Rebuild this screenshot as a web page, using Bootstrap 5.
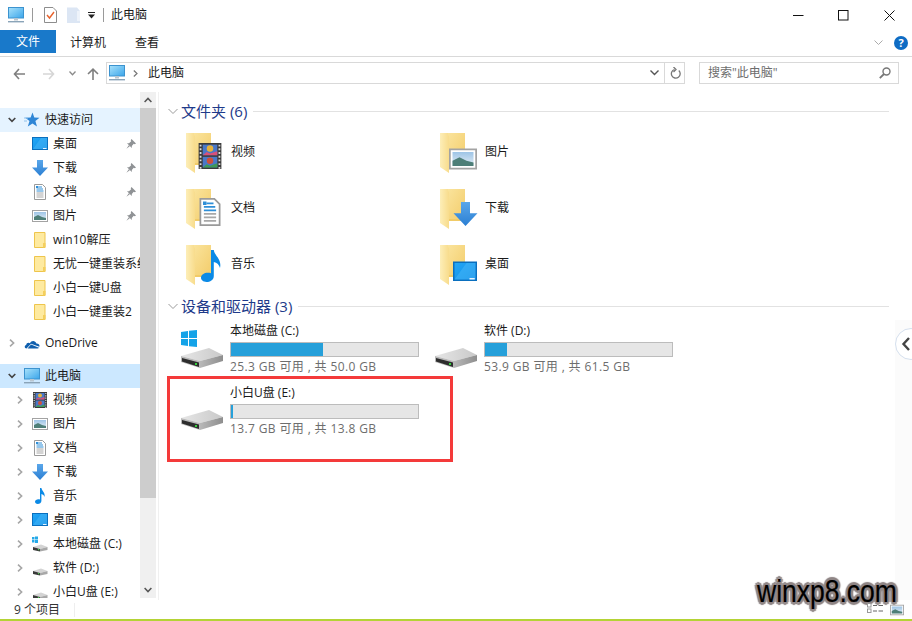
<!DOCTYPE html>
<html lang="zh-CN">
<head>
  <meta charset="utf-8">
  <meta name="viewport" content="width=device-width, initial-scale=1">
  <title>此电脑</title>
  <link href="https://cdn.jsdelivr.net/npm/bootstrap@5.3.3/dist/css/bootstrap.min.css" rel="stylesheet">
  <style>
    html, body { height: 100%; }
    body { font-family: "Open Sans", "Noto Sans CJK SC", sans-serif; font-size: 12px; line-height: 16px; color: #1a1a1a; background: #fff; overflow: hidden; position: relative; }
    svg { display: block; flex: none; }
    .title-row { height: 30px; }
    .qa-sep { width: 1px; height: 14px; background: #9a9a9a; }
    .tab-row { height: 27px; padding-bottom: 3px; border-bottom: 1px solid #d9d9d9; }
    .file-tab { width: 56px; height: 23px; background: #1979ca; color: #fff; }
    .addr-row { height: 35px; padding-top: 5px; }
    .addr-box { height: 22px; border: 1px solid #d9d9d9; }
    .main-area { height: 508px; }
    .side-pane { width: 140px; height: 506px; overflow: hidden; padding-top: 16px; white-space: nowrap; }
    .side-row { height: 24px; padding-left: 8px; }
    .side-row.lvl1 { padding-left: 16px; }
    .side-row .lbl { margin-left: 5px; }
    .tw { width: 8px; flex: none; }
    .side-icon { margin-left: 8px; }
    .row-quick { background: #e5f3ff; }
    .row-pc { background: #cce8ff; }
    .pin-icon { position: absolute; left: 126px; }
    .scroll-col { width: 16px; height: 506px; background: #f0f0f0; }
    .scroll-btn { height: 16px; }
    .scroll-thumb { height: 390px; background: #cdcdcd; }
    .pane-line { width: 1px; margin-left: 2px; height: 100%; background: #f0f0f0; }
    .content-pane { width: 730px; padding: 9px 0 0 9px; }
    .group-head { height: 20px; width: 721px; color: #1e3a8a; font-size: 15px; }
    .group-head .rule { height: 1px; background: #e2e2e2; margin-left: 6px; }
    .tile-grid { display: grid; grid-template-columns: 254px 254px; grid-auto-rows: 56px; margin: 3px 0 0 8px; }
    .folder-tile { padding-left: 10px; }
    .folder-tile svg { margin-top: 2px; }
    .folder-tile span { margin-left: 5px; }
    .drive-grid { display: grid; grid-template-columns: 254px 254px; grid-auto-rows: 62px; margin: 6px 0 0 8px; }
    .drive-tile { padding-left: 5px; }
    .drive-tile svg { margin-top: 8px; }
    .drive-info { margin-left: 7px; width: 189px; }
    .drive-name { height: 18px; line-height: 18px; }
    .drive-bar { height: 15px; margin-top: 2px; background: #e6e6e6; border: 1px solid #bcbcbc; }
    .drive-fill { height: 100%; background: #26a0da; }
    .drive-free { height: 17px; line-height: 17px; color: #6d6d6d; margin-top: 1px; white-space: nowrap; letter-spacing: .37px; }
    .status-row { height: 19px; padding-left: 14px; color: #333; }
    .status-sep { width: 1px; height: 14px; background: #eee; margin-left: 14px; }
    .green-line { height: 2px; background: #b4d335; }
    .red-box { position: absolute; left: 167px; top: 376px; width: 286px; height: 86px; border: 3px solid #f43a3a; }
    .right-strip { position: absolute; left: 895px; top: 320px; width: 17px; height: 280px; background: #fbfbfb; }
    .side-tab { position: absolute; left: 895px; top: 328px; width: 32px; height: 32px; border-radius: 50%; background: #fff; border: 1px solid #d5e0ee; }
    .side-tab svg { margin: 7px 0 0 5px; }
    .wm-text { position: absolute; left: 757px; top: 572px; font-family: "Liberation Sans", sans-serif; font-size: 31px; line-height: 40px; color: #000; white-space: nowrap; transform: scaleX(.855); transform-origin: left center; -webkit-text-stroke: .2px #000; text-shadow: 3px 0 1px #8f8585, -3px 0 1px #8f8585, 0 3px 1px #8f8585, 0 -3px 1px #8f8585, 2px 2px 1px #8f8585, -2px -2px 1px #8f8585, 2px -2px 1px #8f8585, -2px 2px 1px #8f8585; }
    .view-icons { position: absolute; left: 867px; top: 603px; }
  </style>
</head>
<body>

<!-- shared icons -->
<svg width="0" height="0" class="position-absolute">
  <defs>
    <linearGradient id="gScreen" x1="0" y1="0" x2="1" y2="1"><stop offset="0" stop-color="#a9e2fb"/><stop offset="1" stop-color="#3aa5ea"/></linearGradient>
    <linearGradient id="gBack" x1="0" y1="0" x2="1" y2="1"><stop offset="0" stop-color="#fae39b"/><stop offset="1" stop-color="#f3cd6c"/></linearGradient>
    <linearGradient id="gFlap" x1="0" y1="0" x2="1" y2="0"><stop offset="0" stop-color="#fdeeb8"/><stop offset="1" stop-color="#f8dc8c"/></linearGradient>
    <linearGradient id="gDesk" x1="0" y1="0" x2="1" y2="1"><stop offset="0" stop-color="#23a8f6"/><stop offset="1" stop-color="#0f8be6"/></linearGradient>
    <linearGradient id="gArrow" x1="0" y1="0" x2="0" y2="1"><stop offset="0" stop-color="#5aa7ea"/><stop offset="1" stop-color="#2b7fd3"/></linearGradient>
    <linearGradient id="gTop" x1="0" y1="0" x2="1" y2="0"><stop offset="0" stop-color="#e6e6e6"/><stop offset="1" stop-color="#c9c9c9"/></linearGradient>
    <linearGradient id="gSide" x1="0" y1="0" x2="1" y2="0"><stop offset="0" stop-color="#b8b8b8"/><stop offset="1" stop-color="#8e8e8e"/></linearGradient>
    <linearGradient id="gSky" x1="0" y1="0" x2="0" y2="1"><stop offset="0" stop-color="#9dc4e6"/><stop offset="1" stop-color="#e4eef5"/></linearGradient>

    <symbol id="i-pc" viewBox="0 0 16 16">
      <rect x="0.5" y="0.5" width="15" height="10.5" fill="url(#gScreen)" stroke="#3c93cf"/>
      <rect x="6" y="11" width="4" height="2.5" fill="#b9c6d0"/>
      <rect x="0" y="14" width="16" height="1.4" fill="#8aa4b8"/>
    </symbol>
    <symbol id="i-desk" viewBox="0 0 16 16">
      <rect x="0.5" y="1.5" width="15" height="12" fill="url(#gDesk)" stroke="#0a6fbe"/>
      <path d="M1 13 L9 2 H15 V13 Z" fill="#4fbcf8" opacity=".45"/>
      <rect x="11" y="12" width="3.5" height="1" fill="#e6f4ff"/>
    </symbol>
    <symbol id="i-down" viewBox="0 0 16 16">
      <path d="M5 0 H11 V7.5 H16 L8 16 L0 7.5 H5 Z" fill="url(#gArrow)"/>
    </symbol>
    <symbol id="i-doc" viewBox="0 0 16 16">
      <path d="M2.5 .5 H10.5 L13.5 3.5 V15.5 H2.5 Z" fill="#fff" stroke="#9a9a9a"/>
      <path d="M6 3 H10 M4.5 5 H11 M4.5 7 H11.5" stroke="#2f8fd8"/>
      <path d="M4.5 9 H11.5 M4.5 11 H11.5 M4.5 13 H11.5" stroke="#a8a8a8"/>
      <rect x="4" y="2" width="2" height="2" fill="#2f8fd8"/>
    </symbol>
    <symbol id="i-pic" viewBox="0 0 16 16">
      <rect x="0.5" y="2.5" width="15" height="11" fill="#fff" stroke="#a3a3a3"/>
      <rect x="2" y="4" width="12" height="8" fill="url(#gSky)"/>
      <path d="M2 9 L6 7 L10 9 L14 10 V12 H2 Z" fill="#4e7f78"/>
    </symbol>
    <symbol id="i-film" viewBox="0 0 16 16">
      <rect x="1" y="0" width="14" height="16" fill="#3a3a3a"/>
      <rect x="3.5" y="1" width="9" height="6.5" fill="#4a78c8"/>
      <rect x="3.5" y="8.5" width="9" height="6.5" fill="#4a78c8"/>
      <circle cx="8" cy="3.4" r="2" fill="#e8b23a"/>
      <path d="M3.5 7.5 L6 5.5 L8 6.5 L12.5 5 V7.5 Z" fill="#d8507a"/>
      <circle cx="8" cy="10.9" r="2" fill="#d0503a"/>
      <path d="M3.5 15 L6 13 L8 14 L12.5 12.5 V15 Z" fill="#3f9a56"/>
      <path d="M2.2 1 V16 M13.8 1 V16" stroke="#dcdcdc" stroke-width="1.1" stroke-dasharray="1.1 1.2"/>
    </symbol>
    <symbol id="i-note" viewBox="0 0 16 16">
      <path d="M8 0 H9.4 C9.8 3 13.5 4.5 12.5 9 C12.2 7.5 11 6.3 9.4 6 V13 C9.4 15 7.4 16 5.8 16 C4 16 3 15 3 13.8 C3 12 5.6 10.8 8 11.6 Z" fill="#0b8ae6"/>
    </symbol>
    <symbol id="i-small-folder" viewBox="0 0 16 16">
      <path d="M2.5 .5 H13 V15.5 H2.5 Z" fill="#feeaa0" stroke="#eec54c"/>
      <path d="M11 11 H13.5 V15.5 H11 Z" fill="#f4cf5d"/>
    </symbol>
    <symbol id="i-star" viewBox="0 0 16 16">
      <path d="M8.5 0.5 L10.3 5.5 L15.5 5.7 L11.4 9 L13 14.5 L8.5 11.4 L3.8 14.5 L5.5 9 L1.2 5.7 L6.6 5.5 Z" fill="#2f86d6"/>
      <path d="M0 6 H4 M0 9 H3" stroke="#8fc1ec"/>
    </symbol>
    <symbol id="i-cloud" viewBox="0 0 16 16">
      <path d="M2.5 13.5 C0.5 13.5 0 10.5 2.2 10 C2.3 7.8 4.8 7.2 6 8.3 C7.2 5.2 11.5 5.4 12.4 8.6 C14.8 8.6 16 10.4 15.4 11.8 L7 8.8 Z" fill="#0f5fae"/>
      <path d="M3.5 13.5 L7 9.5 L15 12.8 C14.8 13.3 14.2 13.5 13.6 13.5 Z" fill="#0f5fae"/>
    </symbol>
    <symbol id="i-pin" viewBox="0 0 10 10">
      <path d="M5.5 0 L10 4.5 L8.8 5.3 L7.7 4.8 L5.8 7 L5.8 9 L1 4.2 H3 L5.2 2.3 L4.7 1.2 Z M2.8 6.2 L3.8 7.2 L0.4 9.8 Z" fill="#8f9295"/>
    </symbol>
    <symbol id="i-hdd-small" viewBox="0 0 16 16">
      <path d="M1 11 L9 8.5 L15.5 11 L8 13 Z" fill="#d4d4d4"/>
      <path d="M1 11 L8 13 V15.5 L1 14 Z" fill="#3a3a3a"/>
      <path d="M8 13 L15.5 11 V14 L8 15.5 Z" fill="#a8a8a8"/>
      <rect x="6" y="13" width="1.2" height="1.2" fill="#46d34a"/>
    </symbol>
    <symbol id="i-hdd-win" viewBox="0 0 16 16">
      <use href="#i-hdd-small"/>
      <rect x="0" y="1" width="2.5" height="2.5" fill="#26a9e8"/><rect x="3" y="0.5" width="3" height="3" fill="#26a9e8"/>
      <rect x="0" y="4" width="2.5" height="2.5" fill="#26a9e8"/><rect x="3" y="4" width="3" height="3" fill="#26a9e8"/>
    </symbol>
    <symbol id="i-folder-big" viewBox="0 0 40 40">
      <rect x="8" y="0" width="17" height="30" fill="url(#gBack)"/>
      <path d="M0 0 H8 V2 L9 3 V40 L0 34 Z" fill="url(#gFlap)"/>
      <path d="M9 30 H25 V32 H9 Z" fill="#f1cb67"/>
    </symbol>
    <symbol id="i-drive" viewBox="0 0 42 44">
      <path d="M0 26 L28 18 L42 25 L19 31 Z" fill="url(#gTop)"/>
      <path d="M0 26 L19 31 V38 L0 32 Z" fill="#b9b9b9"/>
      <path d="M1 28 L18 32.5 V37 L1 31.5 Z" fill="#2d2d2d"/>
      <path d="M19 31 L42 25 V31 L19 38 Z" fill="url(#gSide)"/>
      <rect x="14" y="33" width="2" height="2" fill="#35d13c"/>
    </symbol>
    <symbol id="i-tw-open" viewBox="0 0 8 8"><path d="M.7 2 L4 5.4 L7.3 2" fill="none" stroke="#444" stroke-width="1.6"/></symbol>
    <symbol id="i-tw-closed" viewBox="0 0 8 8"><path d="M2 .7 L5.6 4 L2 7.3" fill="none" stroke="#a6a6a6" stroke-width="1.6"/></symbol>
    <symbol id="i-group" viewBox="0 0 10 10"><path d="M.5 3 L5 7.5 L9.5 3" fill="none" stroke="#9a9a9a"/></symbol>
  </defs>
</svg>

<!-- title bar -->
<div class="title-row d-flex align-items-center">
  <svg class="ms-2" width="16" height="16"><use href="#i-pc"/></svg>
  <div class="qa-sep ms-2"></div>
  <svg style="margin-left:11px" width="13" height="16" viewBox="0 0 13 16"><path d="M.5 .5 H9 L12.5 4 V15.5 H.5 Z" fill="#fff" stroke="#8d8d8d"/><path d="M3 8 L5.5 11 L10 5" fill="none" stroke="#e8622c" stroke-width="1.4"/></svg>
  <svg style="margin-left:10px" width="13" height="16" viewBox="0 0 13 16"><path d="M0 .5 H10 L13 4 V16 H0 Z" fill="#dce6f4"/><path d="M10 .5 V4 H13 V14 H10 Z" fill="#eef3fa"/></svg>
  <svg style="margin-left:8px" width="7" height="7" viewBox="0 0 7 7"><path d="M0 0 H7 V1 H0 Z M0 2.5 H7 L3.5 6.5 Z" fill="#222"/></svg>
  <div class="qa-sep" style="margin-left:8px"></div>
  <span style="margin-left:7px">此电脑</span>
  <div class="ms-auto d-flex align-items-center">
    <svg width="11" height="11" viewBox="0 0 11 11"><path d="M0 5.5 H10.5" stroke="#111"/></svg>
    <svg style="margin-left:34px" width="11" height="11" viewBox="0 0 11 11"><rect x=".5" y=".5" width="9.5" height="9.5" fill="none" stroke="#111"/></svg>
    <svg style="margin-left:35px;margin-right:17px" width="11" height="11" viewBox="0 0 11 11"><path d="M.5 .5 L10.5 10.5 M10.5 .5 L.5 10.5" stroke="#111"/></svg>
  </div>
</div>

<!-- ribbon tabs -->
<div class="tab-row d-flex align-items-start">
  <div class="file-tab d-flex align-items-center justify-content-center">文件</div>
  <span style="margin:5px 0 0 14px">计算机</span>
  <span style="margin:5px 0 0 29px">查看</span>
  <div class="ms-auto d-flex align-items-center" style="height:26px">
    <svg width="9" height="6" viewBox="0 0 9 6"><path d="M.5 .5 L4.5 4.5 L8.5 .5" fill="none" stroke="#aaa"/></svg>
    <div class="rounded-circle d-flex align-items-center justify-content-center text-white fw-bold" style="width:14px;height:14px;background:#0f6cc4;margin:0 4px 0 11px;font-size:11px;line-height:14px">?</div>
  </div>
</div>

<!-- address bar -->
<div class="addr-row d-flex align-items-start">
  <svg style="margin:6px 0 0 13px" width="12" height="12" viewBox="0 0 12 12"><path d="M6 1 L1.5 6 L6 11 M1.5 6 H12" fill="none" stroke="#7f7f7f" stroke-width="1.6"/></svg>
  <svg style="margin:6px 0 0 18px" width="12" height="12" viewBox="0 0 12 12"><path d="M6 1 L10.5 6 L6 11 M10.5 6 H0" fill="none" stroke="#d6d6d6" stroke-width="1.6"/></svg>
  <svg style="margin:9px 0 0 14px" width="7" height="5" viewBox="0 0 7 5"><path d="M.5 .5 L3.5 3.8 L6.5 .5" fill="none" stroke="#8a8a8a" stroke-width="1.3"/></svg>
  <svg style="margin:6px 0 0 11px" width="12" height="12" viewBox="0 0 12 12"><path d="M1 6 L6 1.2 L11 6 M6 1.2 V12" fill="none" stroke="#7f7f7f" stroke-width="1.6"/></svg>
  <div class="addr-box d-flex align-items-center" style="margin-left:7px;width:579px">
    <svg style="margin-left:2px" width="16" height="16"><use href="#i-pc"/></svg>
    <svg style="margin-left:8px" width="5" height="7" viewBox="0 0 5 7"><path d="M.8 .5 L4 3.5 L.8 6.5" fill="none" stroke="#777" stroke-width="1.2"/></svg>
    <span style="margin-left:10px">此电脑</span>
    <div class="ms-auto d-flex align-items-center h-100">
      <svg width="9" height="6" viewBox="0 0 9 6"><path d="M.5 .5 L4.5 4.5 L8.5 .5" fill="none" stroke="#555" stroke-width="1.4"/></svg>
      <div class="h-100" style="width:1px;background:#d9d9d9;margin-left:5px"></div>
      <svg style="margin:0 3px 0 5px" width="11" height="12" viewBox="0 0 11 12"><path d="M8.8 3.5 A4.4 4.4 0 1 1 4.5 2.5 M3.5 0 L6 2.5 L3.5 5" fill="none" stroke="#777" stroke-width="1.3"/></svg>
    </div>
  </div>
  <div class="addr-box d-flex align-items-center" style="margin-left:14px;width:200px;padding-left:8px;color:#6d6d6d">
    <span>搜索"此电脑"</span>
    <svg class="ms-auto" style="margin-right:7px" width="12" height="12" viewBox="0 0 12 12"><circle cx="7.5" cy="4.5" r="3.5" fill="none" stroke="#777" stroke-width="1.4"/><path d="M5 7 L.8 11.2" stroke="#777" stroke-width="1.8"/></svg>
  </div>
</div>

<div class="main-area d-flex">
  <!-- nav tree -->
  <div class="side-pane flex-none">
    <div class="side-row d-flex align-items-center row-quick">
      <svg class="tw" width="8" height="8"><use href="#i-tw-open"/></svg>
      <svg class="side-icon" width="16" height="16"><use href="#i-star"/></svg>
      <span class="lbl">快速访问</span>
    </div>
    <div class="side-row lvl1 d-flex align-items-center position-relative"><span class="tw"></span><svg class="side-icon" width="16" height="16"><use href="#i-desk"/></svg><span class="lbl">桌面</span><svg class="pin-icon" width="10" height="10"><use href="#i-pin"/></svg></div>
    <div class="side-row lvl1 d-flex align-items-center position-relative"><span class="tw"></span><svg class="side-icon" width="16" height="16"><use href="#i-down"/></svg><span class="lbl">下载</span><svg class="pin-icon" width="10" height="10"><use href="#i-pin"/></svg></div>
    <div class="side-row lvl1 d-flex align-items-center position-relative"><span class="tw"></span><svg class="side-icon" width="16" height="16"><use href="#i-doc"/></svg><span class="lbl">文档</span><svg class="pin-icon" width="10" height="10"><use href="#i-pin"/></svg></div>
    <div class="side-row lvl1 d-flex align-items-center position-relative"><span class="tw"></span><svg class="side-icon" width="16" height="16"><use href="#i-pic"/></svg><span class="lbl">图片</span><svg class="pin-icon" width="10" height="10"><use href="#i-pin"/></svg></div>
    <div class="side-row lvl1 d-flex align-items-center"><span class="tw"></span><svg class="side-icon" width="16" height="16"><use href="#i-small-folder"/></svg><span class="lbl">win10解压</span></div>
    <div class="side-row lvl1 d-flex align-items-center"><span class="tw"></span><svg class="side-icon" width="16" height="16"><use href="#i-small-folder"/></svg><span class="lbl">无忧一键重装系统</span></div>
    <div class="side-row lvl1 d-flex align-items-center"><span class="tw"></span><svg class="side-icon" width="16" height="16"><use href="#i-small-folder"/></svg><span class="lbl">小白一键U盘</span></div>
    <div class="side-row lvl1 d-flex align-items-center"><span class="tw"></span><svg class="side-icon" width="16" height="16"><use href="#i-small-folder"/></svg><span class="lbl">小白一键重装2</span></div>

    <div class="side-row d-flex align-items-center" style="margin-top:7px">
      <svg class="tw" width="8" height="8"><use href="#i-tw-closed"/></svg>
      <svg class="side-icon" width="16" height="16"><use href="#i-cloud"/></svg>
      <span class="lbl">OneDrive</span>
    </div>

    <div class="side-row d-flex align-items-center row-pc" style="margin-top:9px">
      <svg class="tw" width="8" height="8"><use href="#i-tw-open"/></svg>
      <svg class="side-icon" width="16" height="16"><use href="#i-pc"/></svg>
      <span class="lbl">此电脑</span>
    </div>
    <div class="side-row lvl1 d-flex align-items-center"><svg class="tw" width="8" height="8"><use href="#i-tw-closed"/></svg><svg class="side-icon" width="16" height="16"><use href="#i-film"/></svg><span class="lbl">视频</span></div>
    <div class="side-row lvl1 d-flex align-items-center"><svg class="tw" width="8" height="8"><use href="#i-tw-closed"/></svg><svg class="side-icon" width="16" height="16"><use href="#i-pic"/></svg><span class="lbl">图片</span></div>
    <div class="side-row lvl1 d-flex align-items-center"><svg class="tw" width="8" height="8"><use href="#i-tw-closed"/></svg><svg class="side-icon" width="16" height="16"><use href="#i-doc"/></svg><span class="lbl">文档</span></div>
    <div class="side-row lvl1 d-flex align-items-center"><svg class="tw" width="8" height="8"><use href="#i-tw-closed"/></svg><svg class="side-icon" width="16" height="16"><use href="#i-down"/></svg><span class="lbl">下载</span></div>
    <div class="side-row lvl1 d-flex align-items-center"><svg class="tw" width="8" height="8"><use href="#i-tw-closed"/></svg><svg class="side-icon" width="16" height="16"><use href="#i-note"/></svg><span class="lbl">音乐</span></div>
    <div class="side-row lvl1 d-flex align-items-center"><svg class="tw" width="8" height="8"><use href="#i-tw-closed"/></svg><svg class="side-icon" width="16" height="16"><use href="#i-desk"/></svg><span class="lbl">桌面</span></div>
    <div class="side-row lvl1 d-flex align-items-center"><svg class="tw" width="8" height="8"><use href="#i-tw-closed"/></svg><svg class="side-icon" width="16" height="16"><use href="#i-hdd-win"/></svg><span class="lbl">本地磁盘 (C:)</span></div>
    <div class="side-row lvl1 d-flex align-items-center"><svg class="tw" width="8" height="8"><use href="#i-tw-closed"/></svg><svg class="side-icon" width="16" height="16"><use href="#i-hdd-small"/></svg><span class="lbl">软件 (D:)</span></div>
    <div class="side-row lvl1 d-flex align-items-center"><svg class="tw" width="8" height="8"><use href="#i-tw-closed"/></svg><svg class="side-icon" width="16" height="16"><use href="#i-hdd-small"/></svg><span class="lbl">小白U盘 (E:)</span></div>
  </div>

  <!-- scrollbar -->
  <div class="scroll-col d-flex flex-column">
    <div class="scroll-btn d-flex align-items-center justify-content-center"><svg width="8" height="6" viewBox="0 0 8 6"><path d="M.6 5 L4 1.4 L7.4 5" fill="none" stroke="#555" stroke-width="1.5"/></svg></div>
    <div class="scroll-thumb"></div>
    <div class="scroll-btn d-flex align-items-center justify-content-center mt-auto"><svg width="8" height="6" viewBox="0 0 8 6"><path d="M.6 1 L4 4.6 L7.4 1" fill="none" stroke="#555" stroke-width="1.5"/></svg></div>
  </div>
  <div class="pane-line"></div>

  <!-- files -->
  <div class="content-pane">
    <div class="group-head d-flex align-items-center">
      <svg width="10" height="10" style="margin-right:3px"><use href="#i-group"/></svg>
      <span>文件夹 (6)</span>
      <div class="rule flex-grow-1"></div>
    </div>
    <div class="tile-grid">
      <div class="folder-tile d-flex align-items-center">
        <svg width="40" height="40" viewBox="0 0 40 40"><use href="#i-folder-big" width="40" height="40"/><use href="#i-film" x="11" y="9" width="26" height="28" preserveAspectRatio="none"/></svg>
        <span>视频</span>
      </div>
      <div class="folder-tile d-flex align-items-center">
        <svg width="40" height="40" viewBox="0 0 40 40"><use href="#i-folder-big" width="40" height="40"/><use href="#i-pic" x="9" y="12" width="28" height="28"/></svg>
        <span>图片</span>
      </div>
      <div class="folder-tile d-flex align-items-center">
        <svg width="40" height="40" viewBox="0 0 40 40"><use href="#i-folder-big" width="40" height="40"/><use href="#i-doc" x="10" y="9" width="28" height="28"/></svg>
        <span>文档</span>
      </div>
      <div class="folder-tile d-flex align-items-center">
        <svg width="40" height="40" viewBox="0 0 40 40"><use href="#i-folder-big" width="40" height="40"/><use href="#i-down" x="13" y="13" width="25" height="24"/></svg>
        <span>下载</span>
      </div>
      <div class="folder-tile d-flex align-items-center">
        <svg width="40" height="40" viewBox="0 0 40 40"><use href="#i-folder-big" width="40" height="40"/><use href="#i-note" x="9" y="5" width="32" height="32"/></svg>
        <span>音乐</span>
      </div>
      <div class="folder-tile d-flex align-items-center">
        <svg width="40" height="40" viewBox="0 0 40 40"><use href="#i-folder-big" width="40" height="40"/><use href="#i-desk" x="11" y="15" width="28" height="24" preserveAspectRatio="none"/></svg>
        <span>桌面</span>
      </div>
    </div>

    <div class="group-head d-flex align-items-center" style="margin-top:4px">
      <svg width="10" height="10" style="margin-right:3px"><use href="#i-group"/></svg>
      <span>设备和驱动器 (3)</span>
      <div class="rule flex-grow-1"></div>
    </div>
    <div class="drive-grid">
      <div class="drive-tile d-flex align-items-start">
        <svg width="42" height="44" viewBox="0 0 42 44"><use href="#i-drive"/><g fill="#14a3e8"><path d="M0 2 L7 1 V8 H0 Z"/><path d="M8 .8 L16 0 V8 H8 Z"/><path d="M0 9 H7 V16 L0 15 Z"/><path d="M8 9 H16 V17 L8 16.2 Z"/></g></svg>
        <div class="drive-info">
          <div class="drive-name">本地磁盘 (C:)</div>
          <div class="drive-bar"><div class="drive-fill" style="width:49%"></div></div>
          <div class="drive-free">25.3 GB 可用 , 共 50.0 GB</div>
        </div>
      </div>
      <div class="drive-tile d-flex align-items-start">
        <svg width="42" height="44" viewBox="0 0 42 44"><use href="#i-drive"/></svg>
        <div class="drive-info">
          <div class="drive-name">软件 (D:)</div>
          <div class="drive-bar"><div class="drive-fill" style="width:12%"></div></div>
          <div class="drive-free">53.9 GB 可用 , 共 61.5 GB</div>
        </div>
      </div>
      <div class="drive-tile d-flex align-items-start">
        <svg width="42" height="44" viewBox="0 0 42 44"><use href="#i-drive"/></svg>
        <div class="drive-info">
          <div class="drive-name">小白U盘 (E:)</div>
          <div class="drive-bar"><div class="drive-fill" style="width:1%"></div></div>
          <div class="drive-free">13.7 GB 可用 , 共 13.8 GB</div>
        </div>
      </div>
    </div>
  </div>
</div>

<!-- status bar -->
<div class="status-row d-flex align-items-center">
  <span>9 个项目</span>
  <div class="status-sep"></div>
</div>
<div class="green-line"></div>

<!-- overlays -->
<div class="right-strip"></div>
<div class="side-tab"><svg width="10" height="16" viewBox="0 0 10 16"><path d="M8 2 L2.5 8 L8 14" fill="none" stroke="#444" stroke-width="2.4"/></svg></div>
<div class="red-box"></div>
<div class="wm-text">winxp8.com</div>
<div class="view-icons d-flex" style="gap:7px">
  <svg width="16" height="10" viewBox="0 0 16 10"><rect x=".5" y=".5" width="3.5" height="3.5" fill="#fff" stroke="#999"/><rect x=".5" y="6" width="3.5" height="3.5" fill="#fff" stroke="#999"/><path d="M6 2.5 H10 M11.5 2.5 H16 M6 8 H10 M11.5 8 H16" stroke="#666"/></svg>
  <svg width="14" height="14" viewBox="0 0 16 16"><use href="#i-pic"/></svg>
</div>

<script src="https://cdn.jsdelivr.net/npm/bootstrap@5.3.3/dist/js/bootstrap.bundle.min.js"></script>
</body>
</html>
